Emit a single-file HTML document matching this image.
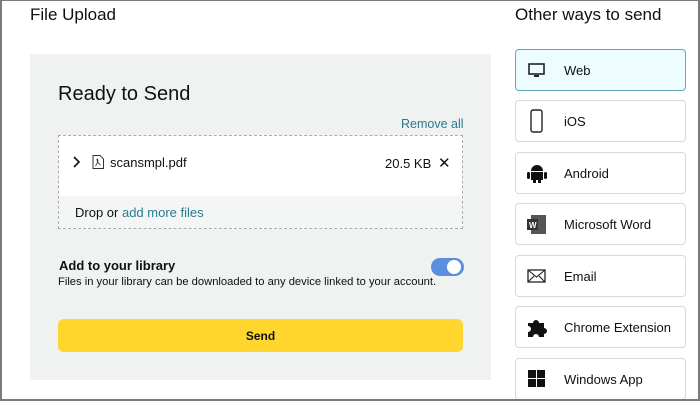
<!DOCTYPE html>
<html><head><style>
*{box-sizing:border-box;margin:0;padding:0}
body{width:700px;height:401px;overflow:hidden;background:#fff;font-family:"Liberation Sans",sans-serif;color:#0f1111;position:relative}
.frame{position:absolute;left:0;top:0;width:700px;height:401px;border:2px solid #7a7a7a;border-top-width:1px;border-right-width:2px;border-bottom-width:2px;z-index:5;pointer-events:none}
.abs{position:absolute}
h1{position:absolute;left:30px;top:5px;font-size:17px;font-weight:normal}
.panel{position:absolute;left:30px;top:54px;width:461px;height:326px;background:#f0f2f2}
.card{position:absolute;left:515px;width:171px;height:42px;border:1px solid #d5d9d9;border-radius:4px;background:#fff;font-size:13px}
.card span{position:absolute;left:48px;top:13px}
.card svg{position:absolute;left:10px;top:9px}
</style></head><body>
<div class="frame"></div>
<h1>File Upload</h1>
<div class="abs" style="left:515px;top:5px;font-size:17px">Other ways to send</div>
<div class="panel"></div>
<div class="abs" style="left:58px;top:83px;font-size:20px">Ready to Send</div>
<div class="abs" style="left:401px;top:117px;font-size:12.5px;color:#2a7a91">Remove all</div>
<div class="abs" style="left:58px;top:135px;width:405px;height:94px;border:1px dashed #aab;background:#fff"></div>
<div class="abs" style="left:59px;top:196px;width:403px;height:32px;background:#f4f6f6"></div>
<div class="abs" style="left:72px;top:155px;font-size:13px">
<svg width="10" height="12" style="vertical-align:-1px"><path d="M2 1l5 5-5 5" fill="none" stroke="#111" stroke-width="1.6"/></svg></div>
<svg class="abs" style="left:92px;top:155px" width="12" height="14"><path d="M1 .5h7l3.5 3.5v9.5h-10.5z" fill="none" stroke="#333"/><path d="M3.5 11c2-3 3-6 2-7s-1 3 3 6" fill="none" stroke="#333" stroke-width=".8"/></svg>
<div class="abs" style="left:110px;top:155px;font-size:13px">scansmpl.pdf</div>
<div class="abs" style="left:385px;top:156px;font-size:13px">20.5 KB</div>
<div class="abs" style="left:438px;top:154px;font-size:15px">✕</div>
<div class="abs" style="left:75px;top:205px;font-size:13px">Drop or <span style="color:#2a7a91">add more files</span></div>
<div class="abs" style="left:59px;top:258px;font-size:13px;font-weight:bold">Add to your library</div>
<div class="abs" style="left:58px;top:276px;font-size:11.2px">Files in your library can be downloaded to any device linked to your account.</div>
<div class="abs" style="left:431px;top:258px;width:33px;height:18px;border-radius:9px;background:#5a8fe0"><div style="position:absolute;right:3px;top:2px;width:14px;height:14px;border-radius:50%;background:#fff"></div></div>
<div class="abs" style="left:58px;top:319px;width:405px;height:33px;border-radius:6px;background:#ffd62e;font-size:12px;font-weight:bold;text-align:center;line-height:35px">Send</div>

<div class="card" style="top:49px;background:#edfdff;border-color:#5fa9b5"><svg width="22" height="22"><rect x="3" y="5" width="15" height="10" fill="none" stroke="#222" stroke-width="1.6"/><path d="M8 17h5" stroke="#222" stroke-width="2"/></svg><span>Web</span></div>
<div class="card" style="top:100px"><svg width="22" height="24" style="top:8px"><rect x="5" y="1" width="11" height="22" rx="2" fill="none" stroke="#222" stroke-width="1.4"/></svg><span>iOS</span></div>
<div class="card" style="top:152px"><svg width="22" height="22"><path d="M5 9a6 6 0 0112 0z" fill="#111"/><rect x="5" y="10" width="12" height="8" fill="#111"/><rect x="1" y="10" width="3" height="7" rx="1.5" fill="#111"/><rect x="18" y="10" width="3" height="7" rx="1.5" fill="#111"/><rect x="7" y="17" width="3" height="4" fill="#111"/><rect x="12" y="17" width="3" height="4" fill="#111"/></svg><span>Android</span></div>
<div class="card" style="top:203px"><svg width="22" height="22"><rect x="5" y="2" width="15" height="19" fill="#555"/><rect x="1" y="6" width="11" height="11" fill="#333"/><text x="3" y="15" font-size="8" fill="#fff" font-family="Liberation Sans" font-weight="bold">W</text></svg><span>Microsoft Word</span></div>
<div class="card" style="top:255px"><svg width="22" height="22"><rect x="2" y="5" width="17" height="12" fill="none" stroke="#222" stroke-width="1.3"/><path d="M2 5l8.5 7 8.5-7M2 17l6-6M19 17l-6-6" fill="none" stroke="#222" stroke-width="1.1"/></svg><span>Email</span></div>
<div class="card" style="top:306px"><svg width="22" height="22"><path d="M2 7h5a3 3 0 016 0h5v5a3 3 0 010 6v3h-5a3 3 0 00-6 0h-5v-5a3 3 0 000-6z" fill="#111"/></svg><span>Chrome Extension</span></div>
<div class="card" style="top:358px"><svg width="22" height="22"><rect x="2" y="2" width="8" height="8" fill="#111"/><rect x="11" y="2" width="8" height="8" fill="#111"/><rect x="2" y="11" width="8" height="8" fill="#111"/><rect x="11" y="11" width="8" height="8" fill="#111"/></svg><span>Windows App</span></div>
</body></html>
